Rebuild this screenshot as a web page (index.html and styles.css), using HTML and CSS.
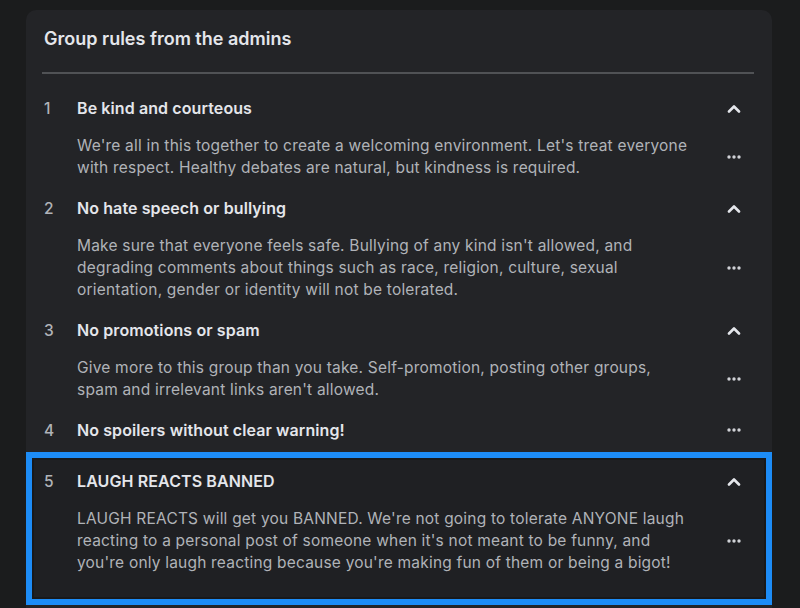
FILE: index.html
```html
<!DOCTYPE html>
<html lang="en">
<head>
<meta charset="utf-8">
<title>Group rules from the admins</title>
<link rel="stylesheet" href="styles.css">
</head>
<body>
<div class="card">
  <div class="card-head">
    <h2 class="card-title">Group rules from the admins</h2>
    <div class="divider"></div>
  </div>
  <ol class="rules">
    <li class="rule">
      <span class="rule-num">1</span>
      <span class="rule-title">Be kind and courteous</span>
      <span class="rule-act chev"><svg width="14" height="9" viewBox="0 0 14 9"><polyline points="2,7.5 7,2.5 12,7.5" fill="none" stroke="#e4e6eb" stroke-width="2.6" stroke-linecap="round" stroke-linejoin="round"/></svg></span>
      <p class="rule-desc">We're all in this together to create a welcoming environment. Let's treat everyone with respect. Healthy debates are natural, but kindness is required.</p>
      <span class="rule-act dots"><svg width="16" height="4" viewBox="0 0 16 4"><circle cx="3" cy="2" r="1.7" fill="#d0d2d6"/><circle cx="8" cy="2" r="1.7" fill="#d0d2d6"/><circle cx="13" cy="2" r="1.7" fill="#d0d2d6"/></svg></span>
    </li>
    <li class="rule">
      <span class="rule-num">2</span>
      <span class="rule-title">No hate speech or bullying</span>
      <span class="rule-act chev"><svg width="14" height="9" viewBox="0 0 14 9"><polyline points="2,7.5 7,2.5 12,7.5" fill="none" stroke="#e4e6eb" stroke-width="2.6" stroke-linecap="round" stroke-linejoin="round"/></svg></span>
      <p class="rule-desc">Make sure that everyone feels safe. Bullying of any kind isn't allowed, and degrading comments about things such as race, religion, culture, sexual orientation, gender or identity will not be tolerated.</p>
      <span class="rule-act dots"><svg width="16" height="4" viewBox="0 0 16 4"><circle cx="3" cy="2" r="1.7" fill="#d0d2d6"/><circle cx="8" cy="2" r="1.7" fill="#d0d2d6"/><circle cx="13" cy="2" r="1.7" fill="#d0d2d6"/></svg></span>
    </li>
    <li class="rule">
      <span class="rule-num">3</span>
      <span class="rule-title">No promotions or spam</span>
      <span class="rule-act chev"><svg width="14" height="9" viewBox="0 0 14 9"><polyline points="2,7.5 7,2.5 12,7.5" fill="none" stroke="#e4e6eb" stroke-width="2.6" stroke-linecap="round" stroke-linejoin="round"/></svg></span>
      <p class="rule-desc">Give more to this group than you take. Self-promotion, posting other groups, spam and irrelevant links aren't allowed.</p>
      <span class="rule-act dots"><svg width="16" height="4" viewBox="0 0 16 4"><circle cx="3" cy="2" r="1.7" fill="#d0d2d6"/><circle cx="8" cy="2" r="1.7" fill="#d0d2d6"/><circle cx="13" cy="2" r="1.7" fill="#d0d2d6"/></svg></span>
    </li>
    <li class="rule rule-collapsed">
      <span class="rule-num">4</span>
      <span class="rule-title">No spoilers without clear warning!</span>
      <span class="rule-act dots"><svg width="16" height="4" viewBox="0 0 16 4"><circle cx="3" cy="2" r="1.7" fill="#d0d2d6"/><circle cx="8" cy="2" r="1.7" fill="#d0d2d6"/><circle cx="13" cy="2" r="1.7" fill="#d0d2d6"/></svg></span>
    </li>
    <li class="rule rule-focus">
      <span class="rule-num">5</span>
      <span class="rule-title">LAUGH REACTS BANNED</span>
      <span class="rule-act chev"><svg width="14" height="9" viewBox="0 0 14 9"><polyline points="2,7.5 7,2.5 12,7.5" fill="none" stroke="#e4e6eb" stroke-width="2.6" stroke-linecap="round" stroke-linejoin="round"/></svg></span>
      <p class="rule-desc">LAUGH REACTS will get you BANNED. We're not going to tolerate ANYONE laugh reacting to a personal post of someone when it's not meant to be funny, and you're only laugh reacting because you're making fun of them or being a bigot!</p>
      <span class="rule-act dots"><svg width="16" height="4" viewBox="0 0 16 4"><circle cx="3" cy="2" r="1.7" fill="#d0d2d6"/><circle cx="8" cy="2" r="1.7" fill="#d0d2d6"/><circle cx="13" cy="2" r="1.7" fill="#d0d2d6"/></svg></span>
    </li>
  </ol>
</div>
</body>
</html>
```

FILE: styles.css
```css
* { box-sizing: border-box; }

html, body {
  margin: 0;
  padding: 0;
  height: 100%;
  overflow: hidden;
  background: #1b1c1d;
  font-family: "Inter", "Liberation Sans", sans-serif;
}

.card {
  margin: 10px 0 0 26px;
  width: 746px;
  height: 640px;
  background: #232427;
  border-radius: 10px;
}

.card-head {
  padding: 18px 18px 0 16px;
}

.card-title {
  margin: 0 0 0 2px;
  font-size: 18px;
  line-height: 22px;
  font-weight: 600;
  color: #e4e6eb;
}

.divider {
  margin-top: 22px;
  height: 2px;
  background: #505255;
}

.rules {
  list-style: none;
  margin: 16px 0 0;
  padding: 0;
}

.rule {
  display: grid;
  grid-template-columns: 33px 1fr 40px;
  grid-template-rows: 36px auto;
  padding: 0 18px 11px;
}

.rule-collapsed {
  padding-bottom: 4px;
}

.rule-num {
  grid-column: 1;
  grid-row: 1;
  align-self: center;
  font-size: 15.5px;
  line-height: 20px;
  font-weight: 500;
  color: #b0b3b8;
  padding-top: 1px;
}

.rule-title {
  grid-column: 2;
  grid-row: 1;
  align-self: center;
  font-size: 16px;
  line-height: 20px;
  font-weight: 600;
  letter-spacing: 0.1px;
  color: #e4e6eb;
}

.rule-desc {
  grid-column: 2;
  grid-row: 2;
  margin: 9px 0 0;
  padding-right: 26px;
  font-size: 15.5px;
  line-height: 22px;
  letter-spacing: 0.2px;
  color: #b0b3b8;
}

.rule-act {
  grid-column: 3;
  display: flex;
  align-items: center;
  justify-content: center;
}

.chev {
  grid-row: 1;
}

.dots {
  grid-row: 2;
  padding-top: 9px;
}

.rule-collapsed .dots {
  grid-row: 1;
  padding-top: 0;
}

.rule-focus {
  border: 6px solid #1d8cf6;
  background: #1f2023;
  box-shadow: inset 0 0 0 2px #18191b;
  padding: 5px 12px 25px;
}
```
